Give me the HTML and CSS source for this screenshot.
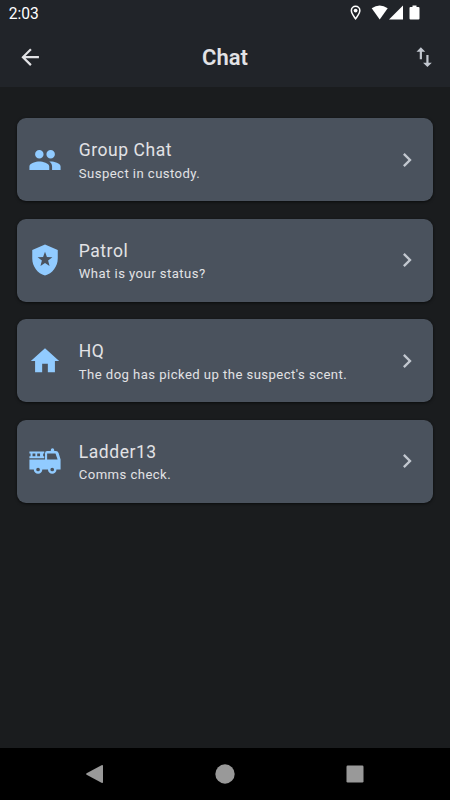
FILE: index.html
```html
<!DOCTYPE html>
<html lang="en">
<head>
	<meta charset="UTF-8">
	<meta name="viewport" content="width=device-width, initial-scale=1.0">
	<title>Chat</title>
	<link rel="stylesheet" href="styles.css">
</head>
<body>

	<header class="top">
		<div class="status-bar">
			<span class="time">2:03</span>
			<svg class="status-icons" width="74" height="18" viewBox="0 0 74 18">
				<path fill="#fff" fill-rule="evenodd" d="M5.6 1.6a5 5 0 0 0-5 5c0 3.7 5 9.4 5 9.4s5-5.7 5-9.4a5 5 0 0 0-5-5zm0 1.5a3.5 3.5 0 0 1 3.5 3.5c0 2-2 5-3.5 7-1.5-2-3.5-5-3.5-7a3.5 3.5 0 0 1 3.5-3.5z"/>
				<circle cx="5.6" cy="6.6" r="1.9" fill="#fff"/>
				<path fill="#fff" d="M21.7 4.3Q29.7-1.3 37.7 4.3L29.7 15.6z"/>
				<path fill="#fff" d="M53 1.6V15.6H39z"/>
				<path fill="#fff" d="M62.5 1.5h4v1.4h2q1 0 1 1v10.7q0 1-1 1h-8q-1 0-1-1V3.9q0-1 1-1h2z"/>
			</svg>
		</div>
		<nav class="app-bar">
			<svg class="bar-icon" viewBox="0 0 24 24"><path fill="#e2e2e5" d="M20 11H7.83l5.59-5.59L12 4l-8 8 8 8 1.41-1.41L7.83 13H20v-2z"/></svg>
			<h1>Chat</h1>
			<svg class="bar-icon" viewBox="0 0 24 24"><path fill="#c2c7cf" d="M9 3L5 6.99h3V14h2V6.99h3L9 3zm7 14.01V10h-2v7.01h-3L15 21l4-3.99h-3z"/></svg>
		</nav>
	</header>

	<main class="chats">
		<div class="card">
			<svg class="chat-icon" viewBox="0 0 24 24"><path d="M16 11c1.66 0 2.99-1.34 2.99-3S17.66 5 16 5s-3 1.34-3 3 1.34 3 3 3zm-8 0c1.66 0 2.99-1.34 2.99-3S9.66 5 8 5 5 6.34 5 8s1.34 3 3 3zm0 2c-2.33 0-7 1.17-7 3.5V19h14v-2.5C15 14.17 10.33 13 8 13zm8 0c-.29 0-.62.02-.97.05 1.16.84 1.97 1.97 1.97 3.45V19h6v-2.5c0-2.33-4.67-3.5-7-3.5z"/></svg>
			<div class="text">
				<div class="name">Group Chat</div>
				<div class="message">Suspect in custody.</div>
			</div>
			<svg class="chevron" viewBox="0 0 24 24"><path d="M10 6L8.59 7.41 13.17 12l-4.58 4.59L10 18l6-6z"/></svg>
		</div>
		<div class="card">
			<svg class="chat-icon" viewBox="0 0 24 24"><path fill-rule="evenodd" d="M12 1L3 5v6c0 5.55 3.84 10.74 9 12 5.16-1.26 9-6.45 9-12V5l-9-4zM12 6.2l1.35 3.6 3.85.2-3 2.4 1 3.8L12 14.1l-3.2 2.1 1-3.8-3-2.4 3.85-.2z"/></svg>
			<div class="text">
				<div class="name">Patrol</div>
				<div class="message">What is your status?</div>
			</div>
			<svg class="chevron" viewBox="0 0 24 24"><path d="M10 6L8.59 7.41 13.17 12l-4.58 4.59L10 18l6-6z"/></svg>
		</div>
		<div class="card">
			<svg class="chat-icon" viewBox="0 0 24 24"><path d="M10 20v-6h4v6h5v-8h3L12 3 2 12h3v8z"/></svg>
			<div class="text">
				<div class="name">HQ</div>
				<div class="message">The dog has picked up the suspect's scent.</div>
			</div>
			<svg class="chevron" viewBox="0 0 24 24"><path d="M10 6L8.59 7.41 13.17 12l-4.58 4.59L10 18l6-6z"/></svg>
		</div>
		<div class="card">
			<svg class="chat-icon" viewBox="0 0 24 24"><path fill-rule="evenodd" d="M1 5.3h10.5v1.4h-.8v2h.8v1.4H1V8.700h.8v-2H1zM3.200 6.700v2h2v-2zM6.500 6.700v2h2v-2zM12 11V6.500Q12 5 13.500 5h2.600V4.200q0-1.200 1.200-1.200t1.200 1.200V5h1.200q1.400 0 1.900 1.400L23 11v7h-2.900a3 3 0 0 1-6 0h-4a3 3 0 0 1-6 0H1v-7zM13.500 6.700v4.300h7.400l-1.500-4.300zM7.100 16.700a1.300 1.300 0 1 0 0 2.600 1.300 1.300 0 1 0 0-2.600zM17.100 16.700a1.300 1.300 0 1 0 0 2.600 1.300 1.300 0 1 0 0-2.600z"/></svg>
			<div class="text">
				<div class="name">Ladder13</div>
				<div class="message">Comms check.</div>
			</div>
			<svg class="chevron" viewBox="0 0 24 24"><path d="M10 6L8.59 7.41 13.17 12l-4.58 4.59L10 18l6-6z"/></svg>
		</div>
	</main>

	<footer class="nav-bar">
		<svg width="20" height="20" viewBox="0 0 20 20"><path d="M16.5 1.2q1.5-.8 1.5.8v16q0 1.6-1.5.8L1.6 10.8q-1.2-.8 0-1.6z"/></svg>
		<svg width="20" height="20" viewBox="0 0 20 20"><circle cx="10" cy="10" r="9.7"/></svg>
		<svg width="20" height="20" viewBox="0 0 20 20"><rect x="1.5" y="1.5" width="17" height="17" rx="1.2"/></svg>
	</footer>

</body>
</html>
```

FILE: styles.css
```css
* {
	box-sizing: border-box;
}
body {
	margin: 0;
	height: 800px;
	display: flex;
	flex-direction: column;
	background: #1a1c1e;
	color: #e2e2e5;
	font-family: Roboto, sans-serif;
	overflow: hidden;
}
svg {
	display: block;
	flex: none;
}
.top {
	height: 87.4px;
	background: #212429;
}
.status-bar {
	height: 27px;
	padding: 4px 26px 0 8.7px;
	display: flex;
	justify-content: space-between;
}
.time {
	color: #fff;
	font-size: 15.6px;
	line-height: 21px;
}
.app-bar {
	height: 60px;
	padding: 0 13px 0 17.4px;
	display: flex;
	align-items: center;
	justify-content: space-between;
}
.bar-icon {
	width: 26.3px;
	height: 26.3px;
}
h1 {
	margin: 0;
	padding: 2px 4.5px 0 0;
	font-size: 22px;
	font-weight: 600;
	line-height: 28px;
}
.chats {
	flex: 1;
	padding: 31px 17.4px 0;
	display: flex;
	flex-direction: column;
	gap: 17.5px;
}
.card {
	height: 83px;
	padding: 0 11.2px 0 10.4px;
	display: flex;
	align-items: center;
	background: #4a525d;
	border-radius: 9px;
	box-shadow: 0 1px 3px rgba(0, 0, 0, .6);
}
.chat-icon {
	width: 34px;
	height: 34px;
	fill: #91cbff;
}
.text {
	flex: 1;
	margin-left: 17px;
	padding-top: 3px;
}
.name {
	font-size: 17.5px;
	line-height: 23.4px;
	letter-spacing: .55px;
}
.message {
	font-size: 13.1px;
	line-height: 21px;
	letter-spacing: .45px;
}
.chevron {
	width: 28px;
	height: 28px;
	fill: #c2c7cf;
}
.nav-bar {
	height: 52px;
	padding: 0 85px;
	display: flex;
	align-items: center;
	justify-content: space-between;
	background: #000;
	fill: #999;
}
```
